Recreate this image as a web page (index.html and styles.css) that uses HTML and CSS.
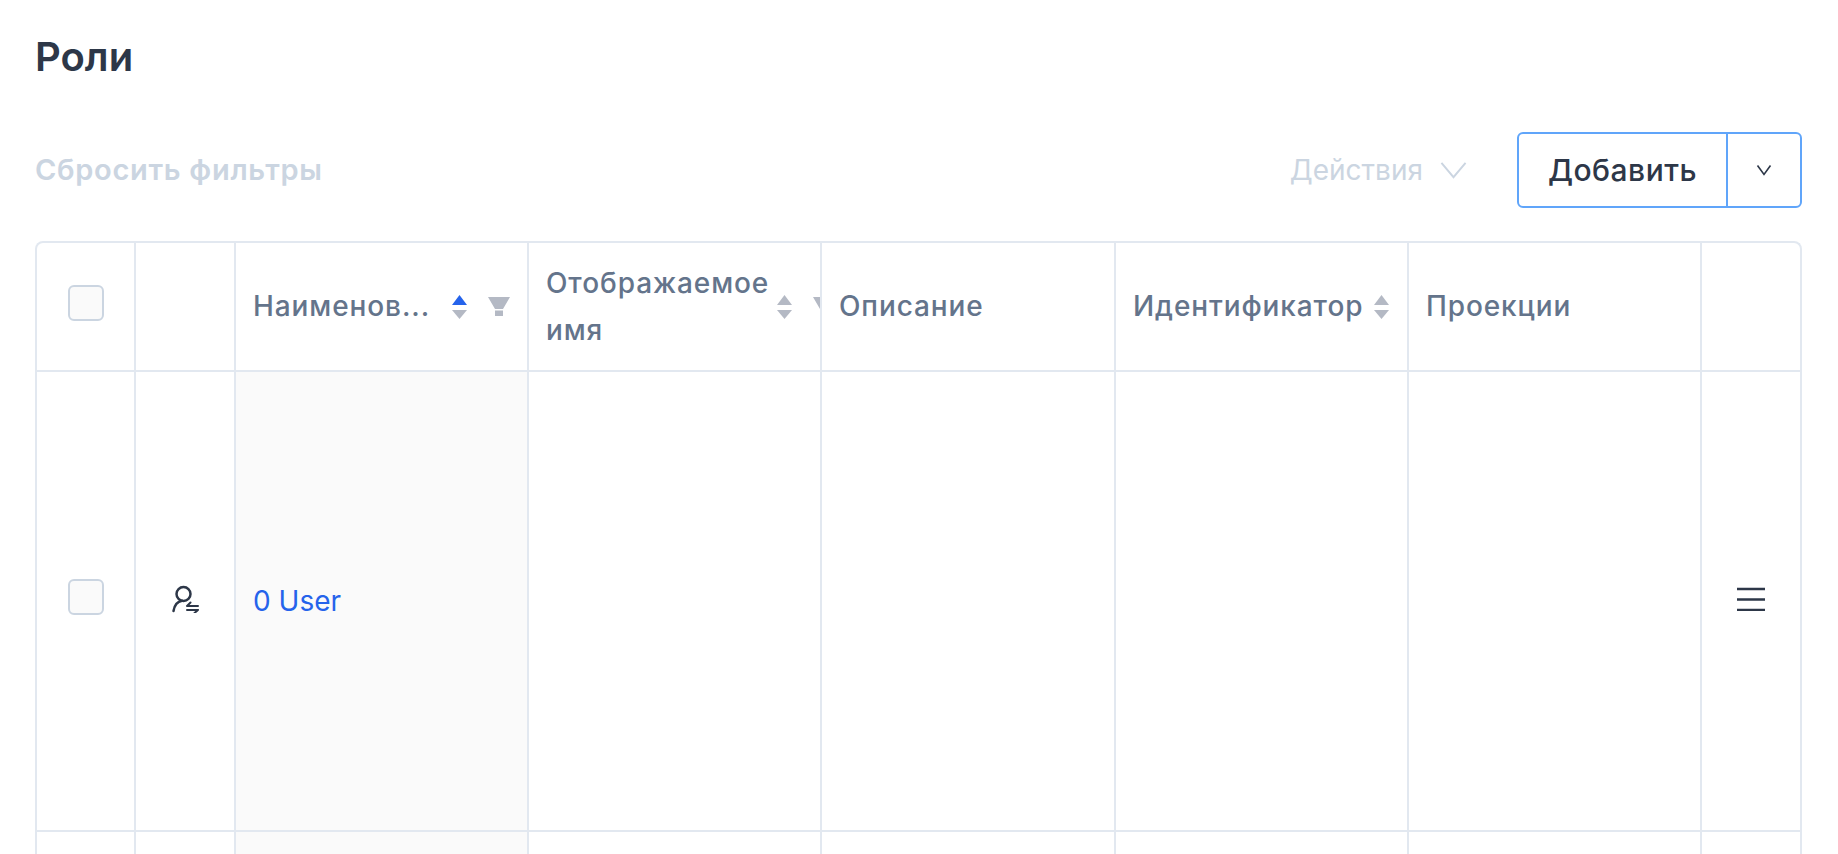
FILE: index.html
```html
<!DOCTYPE html>
<html lang="ru">
<head>
    <meta charset="UTF-8">
    <meta name="viewport" content="width=device-width, initial-scale=1.0">
    <title>Роли</title>
    <link rel="stylesheet" href="styles.css">
</head>
<body>
    <h1 class="page-title">Роли</h1>

    <div class="toolbar">
        <button class="link-btn" type="button" disabled>Сбросить фильтры</button>
        <div class="toolbar-right">
            <button class="actions-btn" type="button" disabled>
                Действия
                <svg class="chevron-lg" viewBox="0 0 28 18"><path d="M1.5 1.5 14 16.5 26.5 1.5"/></svg>
            </button>
            <div class="split-btn">
                <button class="split-main" type="button">Добавить</button>
                <button class="split-arrow" type="button" aria-label="Ещё">
                    <svg class="chevron-sm" viewBox="0 0 16 12"><path d="M1.5 1.5 8 10.5 14.5 1.5"/></svg>
                </button>
            </div>
        </div>
    </div>

    <div class="table-wrap">
        <table class="roles-table">
            <colgroup>
                <col class="col-check">
                <col class="col-icon">
                <col class="col-data">
                <col class="col-data">
                <col class="col-data col-wide">
                <col class="col-data">
                <col class="col-data">
                <col class="col-menu">
            </colgroup>
            <thead>
                <tr>
                    <th class="cell-center"><span class="checkbox"></span></th>
                    <th></th>
                    <th>
                        <div class="th-inner">
                            <span class="th-label th-label-cut">Наименов...</span>
                            <svg class="sort-icon" viewBox="0 0 15 24"><path class="sort-active" d="M7.500 0 15 10H0Z"/><path d="M0 15H15L7.500 24Z"/></svg>
                            <svg class="filter-icon" viewBox="0 0 22 19"><path d="M0 0H22L15 12H7ZM7 13.500H15V19H7Z"/></svg>
                        </div>
                    </th>
                    <th>
                        <div class="th-inner">
                            <span class="th-label">Отображаемое имя</span>
                            <svg class="sort-icon" viewBox="0 0 15 24"><path d="M7.500 0 15 10H0Z"/><path d="M0 15H15L7.500 24Z"/></svg>
                            <svg class="filter-icon" viewBox="0 0 22 19"><path d="M0 0H22L15 12H7ZM7 13.500H15V19H7Z"/></svg>
                        </div>
                    </th>
                    <th><span class="th-label">Описание</span></th>
                    <th>
                        <div class="th-inner th-inner-tight">
                            <span class="th-label">Идентификатор</span>
                            <svg class="sort-icon" viewBox="0 0 15 24"><path d="M7.500 0 15 10H0Z"/><path d="M0 15H15L7.500 24Z"/></svg>
                        </div>
                    </th>
                    <th><span class="th-label">Проекции</span></th>
                    <th></th>
                </tr>
            </thead>
            <tbody>
                <tr class="role-row">
                    <td class="cell-center"><span class="checkbox"></span></td>
                    <td class="cell-center">
                        <svg class="role-icon" viewBox="0 0 28 28">
                            <circle cx="12.500" cy="9" r="7"/>
                            <path d="M2.500 26C3.500 20 7 16.500 11 15.800"/>
                            <path class="thin" d="M16 21H27M19.500 17.500 16 21M16 25H27M27 25 23.500 28"/>
                        </svg>
                    </td>
                    <td class="cell-sorted"><a class="role-link" href="#">0 User</a></td>
                    <td></td>
                    <td></td>
                    <td></td>
                    <td></td>
                    <td class="cell-center">
                        <svg class="menu-icon" viewBox="0 0 28 24"><path d="M0 2H28M0 12.500H28M0 23H28"/></svg>
                    </td>
                </tr>
                <tr class="empty-row">
                    <td></td>
                    <td></td>
                    <td class="cell-sorted"></td>
                    <td></td>
                    <td></td>
                    <td></td>
                    <td></td>
                    <td></td>
                </tr>
            </tbody>
        </table>
    </div>
</body>
</html>
```

FILE: styles.css
```css
html, body {
    height: 100%;
    overflow: hidden;
}
body {
    margin: 0;
    padding: 0 36px 0 35px;
    background: white;
    font-family: Inter, "Noto Sans", sans-serif;
    font-size: 28px;
    color: #2d3748;
}
.page-title {
    margin: 0;
    padding-top: 29px;
    font-size: 40px;
    line-height: 56px;
    font-weight: 600;
    color: #2d3748;
}
.toolbar {
    display: flex;
    align-items: center;
    justify-content: space-between;
    margin-top: 47px;
    margin-bottom: 33px;
}
button {
    font: inherit;
    background: none;
    border: none;
    padding: 0;
}
.link-btn {
    margin-bottom: 2px;
    font-size: 29px;
    font-weight: 600;
    letter-spacing: 0.7px;
    color: #cbd5e1;
}
.toolbar-right {
    display: flex;
    align-items: center;
}
.actions-btn {
    display: flex;
    align-items: center;
    gap: 17px;
    margin-right: 50px;
    color: #cbd5e1;
}
.chevron-lg {
    width: 27px;
    height: 18px;
    fill: none;
    stroke: #cbd5e1;
    stroke-width: 2;
}
.split-btn {
    display: flex;
    height: 76px;
    width: 285px;
    border: 2px solid #60a5fa;
    border-radius: 6px;
    box-sizing: border-box;
}
.split-main {
    flex: 1;
    font-size: 30px;
    font-weight: 500;
    color: #2d3748;
    letter-spacing: 0.5px;
    border-right: 2px solid #60a5fa;
}
.split-arrow {
    width: 72px;
    display: flex;
    align-items: center;
    justify-content: center;
}
.chevron-sm {
    width: 16px;
    height: 12px;
    fill: none;
    stroke: #2d3748;
    stroke-width: 1.6;
}
.table-wrap {
    border: 2px solid #e2e8f0;
    border-radius: 8px 8px 0 0;
    border-bottom: none;
    overflow: hidden;
}
.roles-table {
    width: 100%;
    table-layout: fixed;
    border-collapse: collapse;
}
.col-check { width: 98px; }
.col-icon { width: 100px; }
.col-data { width: 293px; }
.col-wide { width: 294px; }
.col-menu { width: auto; }
.roles-table th,
.roles-table td {
    padding: 0 17px;
    border-left: 2px solid #e2e8f0;
    border-bottom: 2px solid #e2e8f0;
    text-align: left;
    overflow: hidden;
    vertical-align: middle;
}
.roles-table th:first-child,
.roles-table td:first-child {
    border-left: none;
}
.roles-table th {
    height: 127px;
    font-weight: 500;
    color: #64748b;
    line-height: 47px;
    font-size: 28px;
    letter-spacing: 0.9px;
}
.roles-table .cell-center {
    padding: 0;
    text-align: center;
}
.th-inner {
    display: flex;
    align-items: center;
    width: 300px;
}
.th-inner-tight {
    width: auto;
}
.th-label {
    width: 220px;
    flex: none;
}
.th-inner .th-label-cut {
    width: 188px;
    white-space: nowrap;
}
.th-inner-tight .th-label {
    width: auto;
}
.sort-icon {
    flex: none;
    width: 15px;
    height: 24px;
    margin-left: 11px;
    fill: #b4b9c4;
}
.sort-active {
    fill: #2563eb;
}
.filter-icon {
    flex: none;
    width: 22px;
    height: 19px;
    margin-left: 21px;
    fill: #b4b9c4;
}
.checkbox {
    display: inline-block;
    width: 36px;
    height: 36px;
    margin-bottom: 8px;
    vertical-align: middle;
    box-sizing: border-box;
    background: #fafafa;
    border: 2px solid #cbd5e1;
    border-radius: 6px;
}
.roles-table th .checkbox {
    margin-bottom: 10px;
}
.role-row {
    height: 460px;
}
.empty-row {
    height: 460px;
}
.cell-sorted {
    background: #fafafa;
}
.role-link {
    color: #2563eb;
    text-decoration: none;
}
.role-icon {
    width: 28px;
    height: 28px;
    margin-bottom: 6px;
    vertical-align: middle;
    fill: none;
    stroke: #2d3748;
    stroke-width: 2.500;
    stroke-linecap: round;
}
.role-icon .thin {
    stroke-width: 2;
}
.menu-icon {
    width: 28px;
    height: 24px;
    margin-bottom: 8px;
    vertical-align: middle;
    fill: none;
    stroke: #2d3748;
    stroke-width: 2.400;
}
```
